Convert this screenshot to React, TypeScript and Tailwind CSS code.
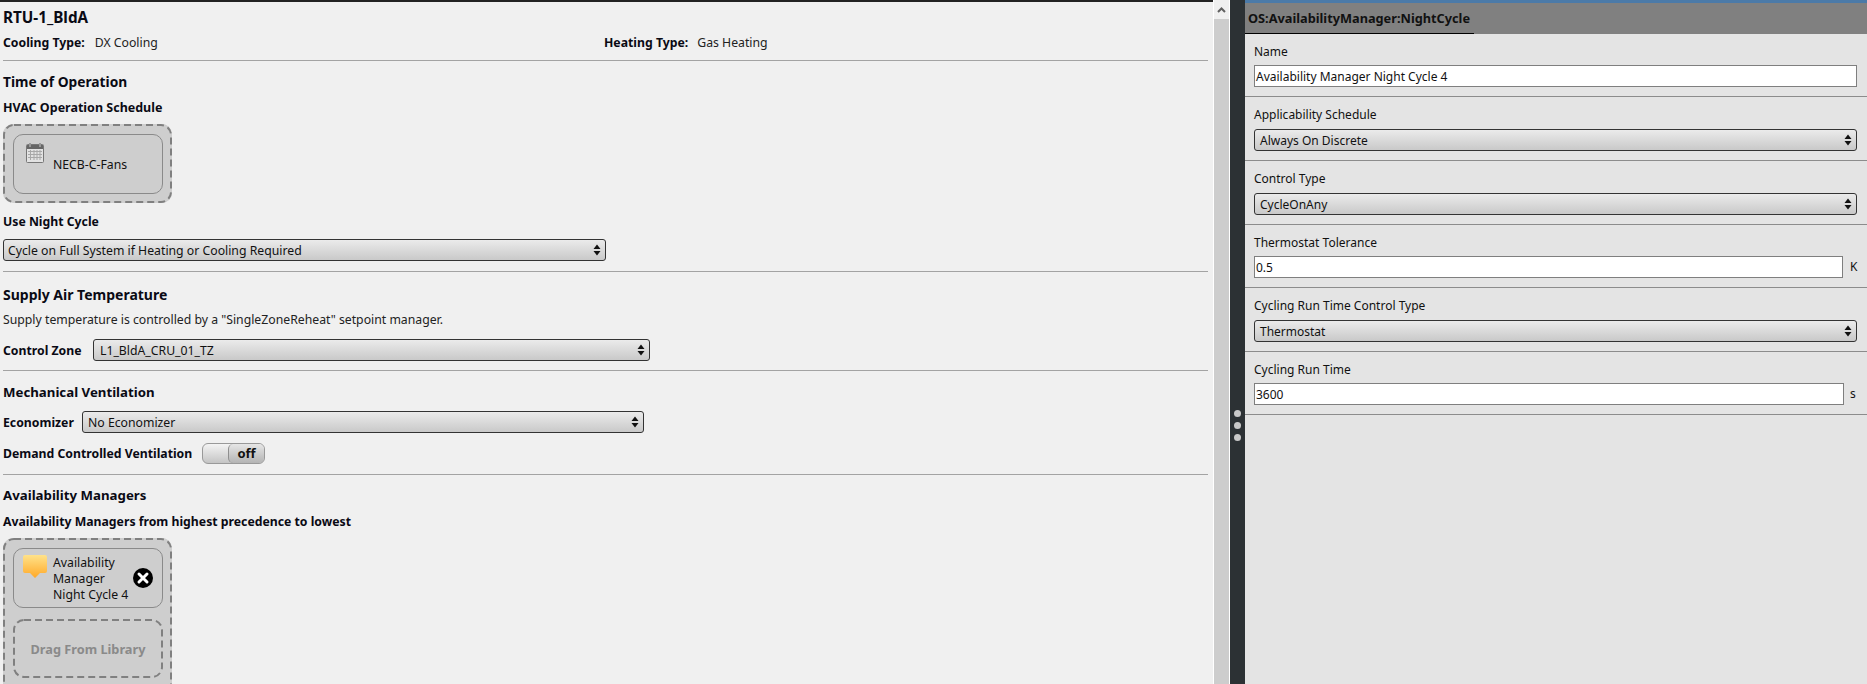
import type { ReactNode } from "react";

const Divider = () => <div className="h-px bg-[#a3a3a3]" />;

const Heading = ({ className, children }: { className: string; children: ReactNode }) => (
  <div className={`flex h-[24px] items-center whitespace-nowrap pt-[2px] font-bold text-[#0a0a14] ${className}`}>{children}</div>
);

const Label = ({ className, children }: { className: string; children: ReactNode }) => (
  <div className={`flex h-[20px] items-center whitespace-nowrap pt-[2px] font-bold text-[#0a0a14] ${className}`}>{children}</div>
);

const Arrows = () => (
  <svg width="8" height="12" viewBox="0 0 8 12" className="shrink-0">
    <path d="M4 0.5 L7.5 5 H0.5 Z M0.5 7 H7.5 L4 11.5 Z" fill="#111" />
  </svg>
);

const ComboBox = ({ value, className }: { value: string; className: string }) => (
  <div
    className={`flex h-[22px] shrink-0 items-center justify-between rounded-[3px] border border-[#333] bg-gradient-to-b from-[#ebebeb] to-[#c9c9c9] pr-[4px] text-[#111] ${className}`}
  >
    <span className="mt-[2px]">{value}</span>
    <Arrows />
  </div>
);

// dashed outline, the css dashes are too short
const DashedFrame = ({ w, h }: { w: number; h: number }) => (
  <svg width={w} height={h} className="absolute left-0 top-0">
    <rect x="1" y="1" width={w - 2} height={h - 2} rx="10" fill="none" stroke="#808080" strokeWidth="2" strokeDasharray="7 4" />
  </svg>
);

const CalendarIcon = () => (
  <svg width="18" height="20" viewBox="0 0 18 20" className="shrink-0">
    <rect x="0.5" y="1.5" width="17" height="18" rx="1" fill="#e2e2e2" stroke="#777" />
    <rect x="1" y="2" width="16" height="4" fill="#666" />
    <rect x="3" y="0" width="2" height="4" fill="#999" />
    <rect x="13" y="0" width="2" height="4" fill="#999" />
    <path
      d="M2 8.5H16M2 11.5H16M2 14.5H16M4.5 7V17M8 7V17M11 7V17M14 7V17"
      stroke="#a8a8a8"
      strokeWidth="1"
      fill="none"
    />
  </svg>
);

const BubbleIcon = () => (
  <svg width="24" height="24" viewBox="0 0 24 24">
    <defs>
      <linearGradient id="bubble" x1="0" y1="0" x2="0" y2="1">
        <stop offset="0" stopColor="#ffe28a" />
        <stop offset="1" stopColor="#ffa928" />
      </linearGradient>
    </defs>
    <path d="M2 0H22Q24 0 24 2V16Q24 18 22 18H17L12 23L7 18H2Q0 18 0 16V2Q0 0 2 0Z" fill="url(#bubble)" />
  </svg>
);

const RemoveIcon = () => (
  <svg width="20" height="20" viewBox="0 0 20 20" className="shrink-0">
    <circle cx="10" cy="10" r="10" fill="#000" />
    <path d="M6 6L14 14M14 6L6 14" stroke="#fff" strokeWidth="3" strokeLinecap="round" />
  </svg>
);

const FieldRow = ({ label, tall, children }: { label: string; tall?: boolean; children: ReactNode }) => (
  <div className={`border-b border-[#8c8c8c] px-[9px] pt-[7px] ${tall ? "h-[64px]" : "h-[63px]"}`}>
    <div className="flex h-[20px] items-center pt-[2px] text-[12px] text-[#111]">{label}</div>
    <div className={`flex items-center ${tall ? "mt-[5px]" : "mt-[4px]"}`}>{children}</div>
  </div>
);

const TextField = ({ value, className }: { value: string; className: string }) => (
  <div className={`flex h-[22px] items-center border border-[#7f7f7f] bg-white pl-[1px] pt-[2px] text-[12px] text-[#111] ${className}`}>
    {value}
  </div>
);

export default function App() {
  return (
    <div className="flex h-[684px] w-[1867px] overflow-hidden bg-[#f0f0f0] font-['Noto_Sans',sans-serif]">
      {/* Left panel */}
      <div className="w-[1213px] shrink-0 overflow-hidden border-t-2 border-[#222] pl-[3px] pr-[5px]">
        <div className="flex h-[28px] items-center pt-[2px] text-[15.25px] font-bold text-[#0a0a14]">RTU-1_BldA</div>
        <div className="flex h-[24px] items-center pt-[2px] text-[12.25px] text-[#222]">
          <div className="flex w-[601px]">
            <span className="font-bold text-[#0a0a14]">Cooling Type:</span>
            <span className="ml-[10px]">DX Cooling</span>
          </div>
          <span className="font-bold text-[#0a0a14]">Heating Type:</span>
          <span className="ml-[9px]">Gas Heating</span>
        </div>
        <div className="mt-[6px]">
          <Divider />
        </div>

        <Heading className="mt-[8px] text-[13.75px]">Time of Operation</Heading>
        <Label className="mt-[4px] text-[12.5px]">HVAC Operation Schedule</Label>
        <div className="relative mt-[7px] h-[79px] w-[169px] rounded-[10px] bg-[#cecece] pl-[10px] pt-[10px]">
          <DashedFrame w={169} h={79} />
          <div className="flex h-[60px] w-[150px] rounded-[10px] border border-[#8a8a8a] pl-[12px] pt-[8px]">
            <CalendarIcon />
            <span className="ml-[9px] mt-[14px] text-[12.25px] leading-[16px] text-[#111]">NECB-C-Fans</span>
          </div>
        </div>
        <Label className="mt-[8px] text-[12.25px]">Use Night Cycle</Label>
        <ComboBox className="mt-[8px] w-[603px] pl-[4px] text-[12.25px]" value="Cycle on Full System if Heating or Cooling Required" />
        <div className="mt-[10px]">
          <Divider />
        </div>

        <Heading className="mt-[9px] text-[14px]">Supply Air Temperature</Heading>
        <div className="mt-[4px] flex h-[20px] items-center pt-[2px] text-[12.25px] text-[#222]">
          Supply temperature is controlled by a "SingleZoneReheat" setpoint manager.
        </div>
        <div className="mt-[10px] flex items-center">
          <span className="mt-[2px] w-[90px] shrink-0 whitespace-nowrap text-[12.25px] font-bold text-[#0a0a14]">Control Zone</span>
          <ComboBox className="w-[557px] pl-[6px] text-[12.25px]" value="L1_BldA_CRU_01_TZ" />
        </div>
        <div className="mt-[9px]">
          <Divider />
        </div>

        <Heading className="mt-[9px] text-[13.25px]">Mechanical Ventilation</Heading>
        <div className="mt-[7px] flex items-center">
          <span className="mt-[2px] w-[79px] shrink-0 whitespace-nowrap text-[12.25px] font-bold text-[#0a0a14]">Economizer</span>
          <ComboBox className="w-[562px] pl-[5px] text-[12.25px]" value="No Economizer" />
        </div>
        <div className="mt-[10px] flex h-[21px] items-center">
          <span className="mt-[2px] w-[199px] shrink-0 whitespace-nowrap text-[12.25px] font-bold text-[#0a0a14]">Demand Controlled Ventilation</span>
          <div className="flex h-[21px] w-[63px] overflow-hidden rounded-[6px] border border-[#999] bg-gradient-to-b from-[#f4f4f4] to-[#c4c4c4]">
            <div className="w-[25px]" />
            <div className="flex flex-1 items-center justify-center rounded-[5px] border-l border-[#8e8e8e] bg-gradient-to-b from-[#e6e6e6] to-[#b4b4b4] text-[13px] font-bold text-[#111]">
              off
            </div>
          </div>
        </div>
        <div className="mt-[10px]">
          <Divider />
        </div>

        <Heading className="mt-[8px] text-[13.25px]">Availability Managers</Heading>
        <Label className="mt-[4px] text-[12.25px]">Availability Managers from highest precedence to lowest</Label>
        <div className="relative mt-[7px] h-[160px] w-[169px] rounded-[10px] bg-[#cecece] pl-[10px] pt-[10px]">
          <DashedFrame w={169} h={160} />
          <div className="flex h-[60px] w-[150px] items-center rounded-[10px] border border-[#8a8a8a] pl-[9px] pr-[9px]">
            <div className="-mt-[23px] shrink-0">
              <BubbleIcon />
            </div>
            <div className="ml-[6px] flex-1 whitespace-nowrap pt-[1px] text-[12.25px] leading-[16px] text-[#111]">
              Availability
              <br />
              Manager
              <br />
              Night Cycle 4
            </div>
            <RemoveIcon />
          </div>
          <div className="relative mt-[11px] flex h-[59px] w-[150px] items-center justify-center pt-[2px] text-[12.75px] font-bold text-[#8a8a8a]">
            <DashedFrame w={150} h={59} />
            Drag From Library
          </div>
        </div>
      </div>

      {/* Scrollbar */}
      <div className="flex w-[17px] shrink-0 flex-col border-x border-white">
        <div className="flex h-[19px] items-center justify-center bg-[#f0f0f0]">
          <svg width="9" height="6" viewBox="0 0 9 6">
            <path d="M1 5L4.5 1.5L8 5" stroke="#606060" strokeWidth="2" fill="none" />
          </svg>
        </div>
        <div className="flex-1 bg-[#cdcdcd]" />
      </div>

      {/* Splitter */}
      <div className="flex w-[15px] shrink-0 flex-col items-center gap-[5px] bg-[#2c3134] pt-[410px]">
        <div className="h-[7px] w-[7px] rounded-full bg-[#c9c9c9]" />
        <div className="h-[7px] w-[7px] rounded-full bg-[#c9c9c9]" />
        <div className="h-[7px] w-[7px] rounded-full bg-[#c9c9c9]" />
      </div>

      {/* Inspector */}
      <div className="flex-1 bg-[#e4e4e4]">
        <div className="h-[3px] bg-[#4b7aa8]" />
        <div className="flex h-[31px] bg-[#808080]">
          <div className="flex w-[229px] items-center whitespace-nowrap border-b border-black pl-[3px] pt-[2px] text-[12.75px] font-bold text-[#111]">
            OS:AvailabilityManager:NightCycle
          </div>
        </div>
        <FieldRow label="Name">
          <TextField className="w-[603px]" value="Availability Manager Night Cycle 4" />
        </FieldRow>
        <FieldRow tall label="Applicability Schedule">
          <ComboBox className="w-[603px] pl-[5px] text-[12px]" value="Always On Discrete" />
        </FieldRow>
        <FieldRow tall label="Control Type">
          <ComboBox className="w-[603px] pl-[5px] text-[12px]" value="CycleOnAny" />
        </FieldRow>
        <FieldRow label="Thermostat Tolerance">
          <TextField className="w-[589px]" value="0.5" />
          <span className="ml-[7px] text-[12px] text-[#111]">K</span>
        </FieldRow>
        <FieldRow tall label="Cycling Run Time Control Type">
          <ComboBox className="w-[603px] pl-[5px] text-[12px]" value="Thermostat" />
        </FieldRow>
        <FieldRow label="Cycling Run Time">
          <TextField className="w-[590px]" value="3600" />
          <span className="ml-[6px] text-[12px] text-[#111]">s</span>
        </FieldRow>
      </div>
    </div>
  );
}
